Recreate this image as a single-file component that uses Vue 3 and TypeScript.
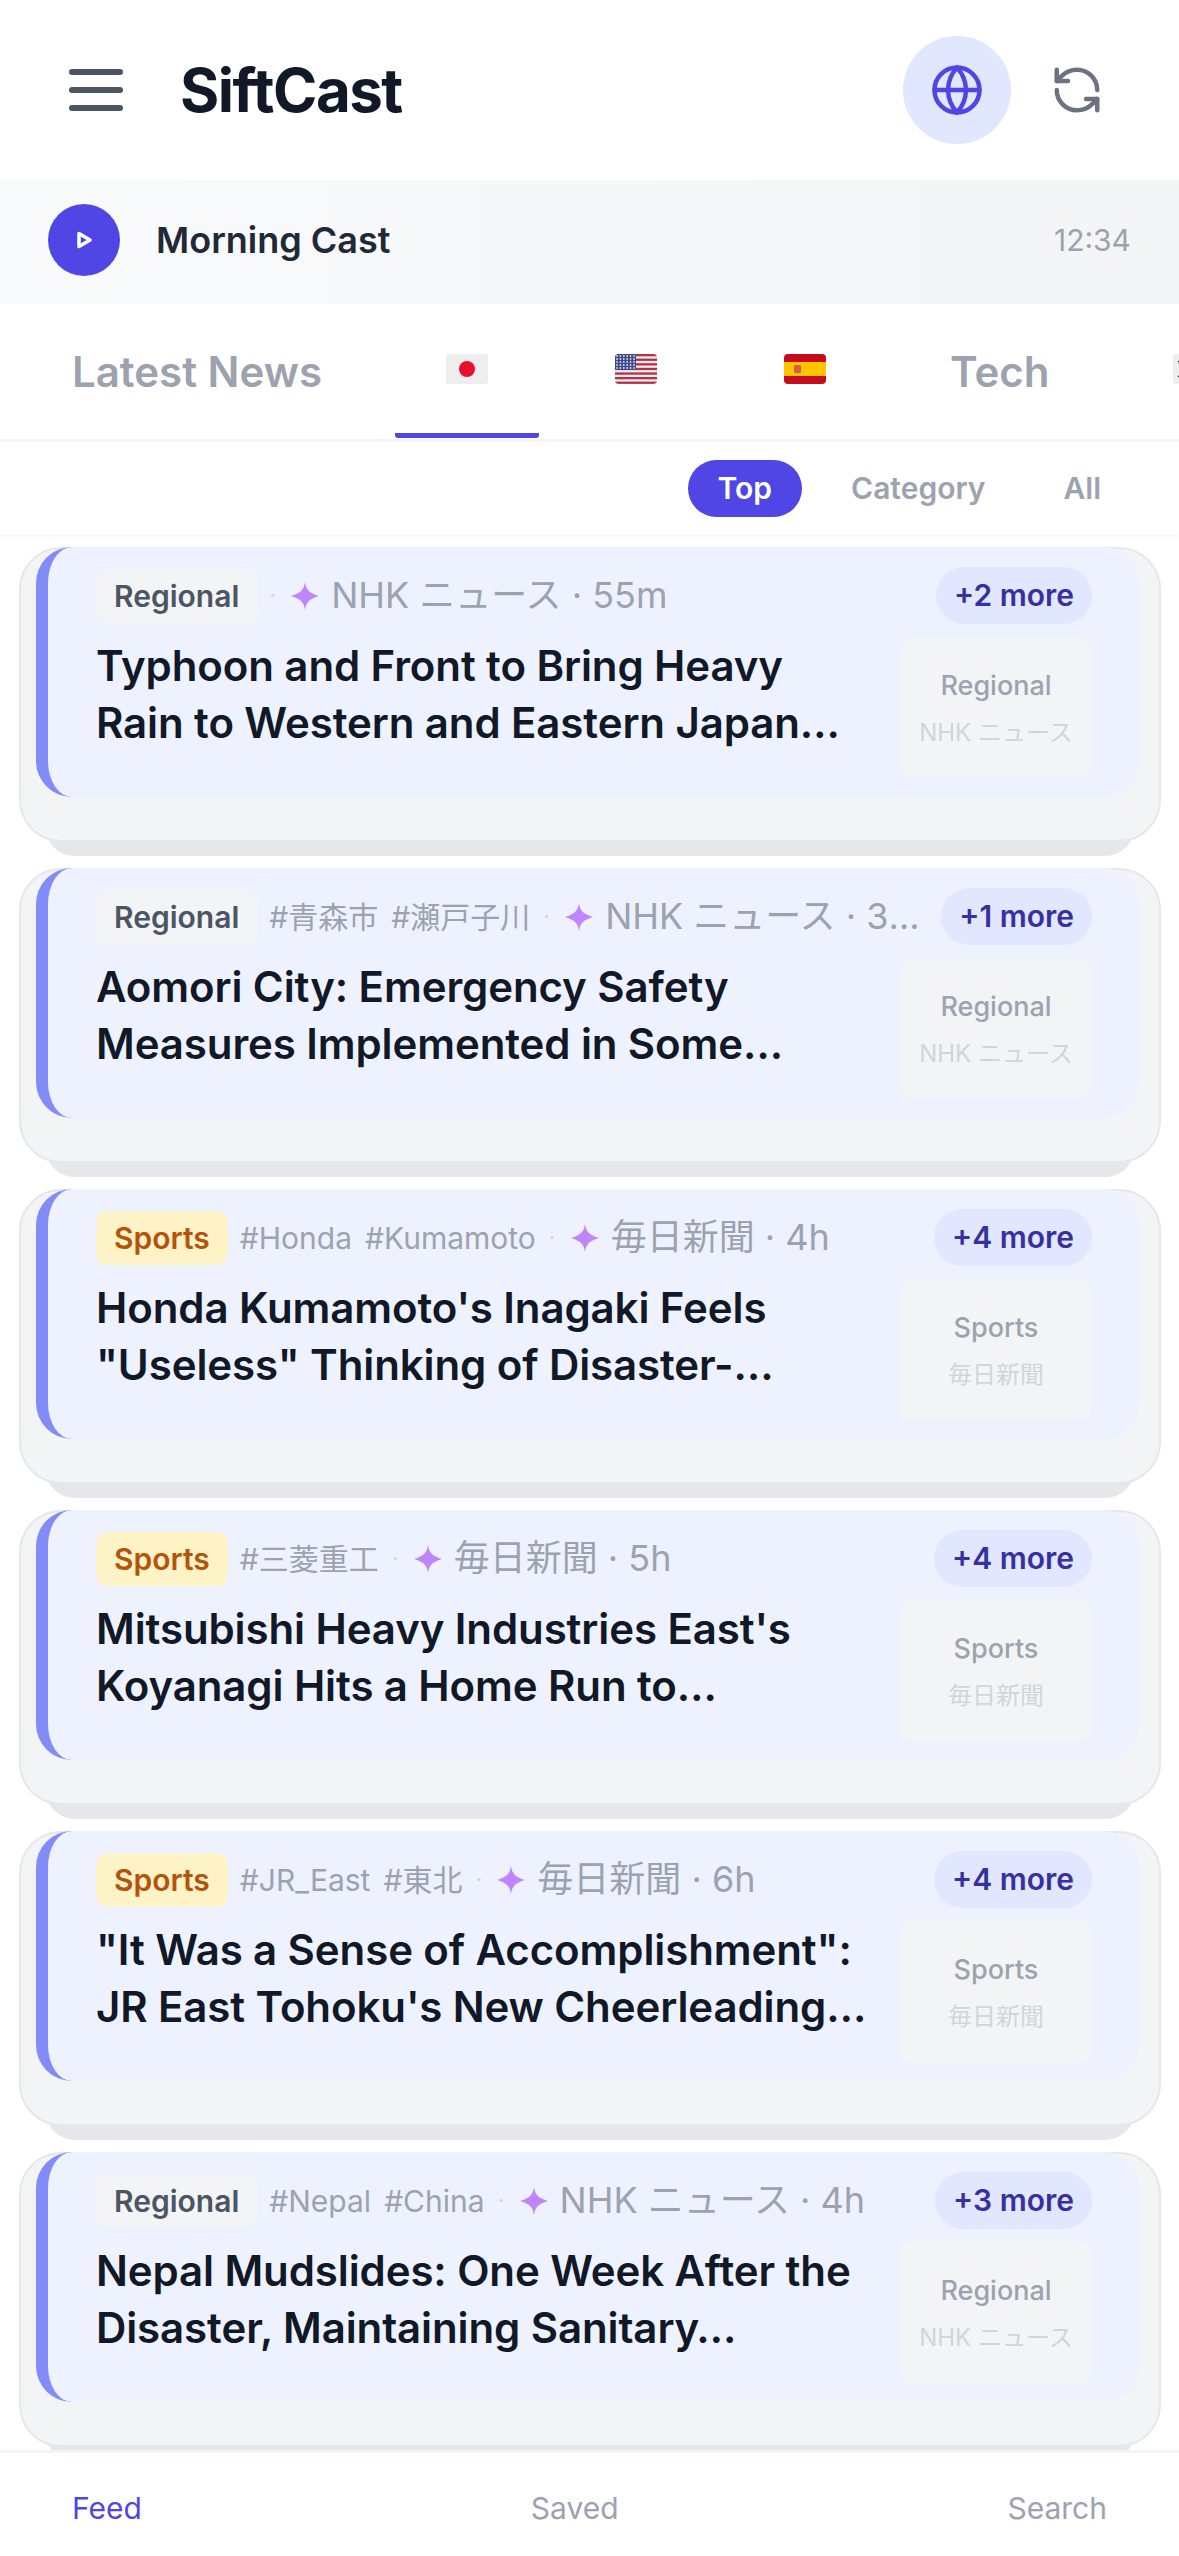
<template>
  <div class="app">
    <header class="top-bar">
      <div class="brand">
        <svg class="menu-icon" viewBox="0 0 54 44" fill="none" stroke="#4b5563" stroke-width="6" stroke-linecap="round">
          <line x1="3" y1="4" x2="51" y2="4" />
          <line x1="3" y1="22" x2="51" y2="22" />
          <line x1="3" y1="40" x2="51" y2="40" />
        </svg>
        <h1>SiftCast</h1>
      </div>
      <div class="top-actions">
        <button class="globe-btn">
          <svg viewBox="0 0 24 24" fill="none" stroke="#4f46e5" stroke-width="2" stroke-linecap="round" stroke-linejoin="round">
            <circle cx="12" cy="12" r="10" />
            <line x1="2" y1="12" x2="22" y2="12" />
            <path d="M12 2a15.3 15.3 0 0 1 4 10 15.3 15.3 0 0 1-4 10 15.3 15.3 0 0 1-4-10 15.3 15.3 0 0 1 4-10z" />
          </svg>
        </button>
        <button class="refresh-btn">
          <svg viewBox="0 0 24 24" fill="none" stroke="#6b7280" stroke-width="2" stroke-linecap="round" stroke-linejoin="round">
            <path d="M21 12a9 9 0 0 0-9-9 9.75 9.75 0 0 0-6.74 2.74L3 8" />
            <path d="M3 3v5h5" />
            <path d="M3 12a9 9 0 0 0 9 9 9.75 9.75 0 0 0 6.74-2.74L21 16" />
            <path d="M16 16h5v5" />
          </svg>
        </button>
      </div>
    </header>

    <div class="cast-bar">
      <span class="play">
        <svg viewBox="0 0 24 24" fill="none" stroke="#fff" stroke-width="3.500" stroke-linejoin="round">
          <polygon points="7,5.500 18,12 7,18.500" />
        </svg>
      </span>
      <span class="cast-title">Morning Cast</span>
      <span class="cast-time">12:34</span>
    </div>

    <nav class="tabs">
      <div class="tab">Latest News</div>
      <div class="tab active">
        <svg class="flag" viewBox="0 0 42 30">
          <rect width="42" height="30" rx="3" fill="#eeeeee" />
          <circle cx="21" cy="15" r="8" fill="#e8112d" />
        </svg>
      </div>
      <div class="tab">
        <svg class="flag" viewBox="0 0 42 30">
          <clipPath id="us-clip"><rect width="42" height="30" rx="4" /></clipPath>
          <g clip-path="url(#us-clip)">
            <rect width="42" height="30" fill="#f4eeee" />
            <rect v-for="n in 7" :key="n" x="0" :y="(n - 1) * 4.6" width="42" height="2.3" fill="#b0334a" />
            <rect width="21" height="16" fill="#3f4a82" />
            <circle v-for="s in usStars" :key="s.id" :cx="s.x" :cy="s.y" r="0.9" fill="#d8dcf0" />
          </g>
        </svg>
      </div>
      <div class="tab">
        <svg class="flag" viewBox="0 0 42 30">
          <clipPath id="es-clip"><rect width="42" height="30" rx="4" /></clipPath>
          <g clip-path="url(#es-clip)">
            <rect width="42" height="30" fill="#c60b1e" />
            <rect y="8" width="42" height="14" fill="#ffc400" />
            <rect x="10" y="11" width="7" height="8" rx="1.5" fill="#d9594c" />
          </g>
        </svg>
      </div>
      <div class="tab">Tech</div>
      <div class="tab">
        <svg class="flag" viewBox="0 0 42 30">
          <rect width="42" height="30" rx="3" fill="#eeeeee" />
          <circle cx="21" cy="15" r="7" fill="#cd2e3a" />
          <path d="M14 15a7 7 0 0 0 14 0z" fill="#0047a0" />
          <path d="M5 8l6-4M6 10l6-4M31 26l6-4M30 24l6-4M5 22l6 4M31 4l6 4" stroke="#333" stroke-width="1.5" />
        </svg>
      </div>
    </nav>

    <div class="sub-tabs">
      <span class="sub-tab active">Top</span>
      <span class="sub-tab">Category</span>
      <span class="sub-tab">All</span>
    </div>

    <main class="feed">
      <article v-for="item in articles" :key="item.id" class="card">
        <div class="card-inner">
          <div class="meta">
            <span class="tag" :class="item.category.toLowerCase()">{{ item.category }}</span>
            <div class="meta-line">
              <span v-for="h in item.hashtags" :key="h" class="hashtag">#{{ h }}</span>
              <span class="dot">·</span>
              <svg class="spark" viewBox="0 0 24 24"><path d="M12 0C13 6 14.500 9 24 12 14.500 15 13 18 12 24 11 18 9.500 15 0 12 9.500 9 11 6 12 0z" fill="#c084fc" /></svg>
              <span class="source">{{ item.source }} · {{ item.age }}</span>
            </div>
            <span class="more">+{{ item.more }} more</span>
          </div>
          <div class="body">
            <h2>{{ item.title }}</h2>
            <div class="thumb">
              <span class="thumb-cat">{{ item.category }}</span>
              <span class="thumb-src">{{ item.source }}</span>
            </div>
          </div>
        </div>
      </article>
    </main>

    <footer class="bottom-nav">
      <span class="active">Feed</span>
      <span>Saved</span>
      <span>Search</span>
    </footer>
  </div>
</template>

<script setup lang="ts">
interface Article {
  id: number
  category: 'Regional' | 'Sports'
  hashtags: string[]
  source: string
  age: string
  more: number
  title: string
}

const usStars: { id: number; x: number; y: number }[] = []
for (let row = 0; row < 5; row++) {
  for (let col = 0; col < 6; col++) {
    usStars.push({ id: row * 6 + col, x: 2 + col * 3.4, y: 2 + row * 3 })
  }
}

const articles: Article[] = [
  {
    id: 1,
    category: 'Regional',
    hashtags: [],
    source: 'NHK ニュース',
    age: '55m',
    more: 2,
    title: 'Typhoon and Front to Bring Heavy Rain to Western and Eastern Japan…'
  },
  {
    id: 2,
    category: 'Regional',
    hashtags: ['青森市', '瀬戸子川'],
    source: 'NHK ニュース',
    age: '39m',
    more: 1,
    title: 'Aomori City: Emergency Safety Measures Implemented in Some…'
  },
  {
    id: 3,
    category: 'Sports',
    hashtags: ['Honda', 'Kumamoto'],
    source: '毎日新聞',
    age: '4h',
    more: 4,
    title: 'Honda Kumamoto\'s Inagaki Feels "Useless" Thinking of Disaster-…'
  },
  {
    id: 4,
    category: 'Sports',
    hashtags: ['三菱重工'],
    source: '毎日新聞',
    age: '5h',
    more: 4,
    title: 'Mitsubishi Heavy Industries East\'s Koyanagi Hits a Home Run to…'
  },
  {
    id: 5,
    category: 'Sports',
    hashtags: ['JR_East', '東北'],
    source: '毎日新聞',
    age: '6h',
    more: 4,
    title: '"It Was a Sense of Accomplishment": JR East Tohoku\'s New Cheerleading…'
  },
  {
    id: 6,
    category: 'Regional',
    hashtags: ['Nepal', 'China'],
    source: 'NHK ニュース',
    age: '4h',
    more: 3,
    title: 'Nepal Mudslides: One Week After the Disaster, Maintaining Sanitary…'
  }
]
</script>

<style>
html,
body {
  margin: 0;
  background: #fff;
}
</style>

<style scoped>
.app {
  height: 2556px;
  display: flex;
  flex-direction: column;
  overflow: hidden;
  background: #fff;
  font-family: Inter, "Noto Sans CJK JP", sans-serif;
}

.top-bar {
  height: 180px;
  flex-shrink: 0;
  display: flex;
  justify-content: space-between;
  align-items: center;
  padding: 0 75px 0 69px;
  box-sizing: border-box;
}

.brand {
  display: flex;
  align-items: center;
  gap: 57px;
}

.menu-icon {
  width: 54px;
  height: 44px;
}

.brand h1 {
  margin: 0;
  font-size: 60px;
  font-weight: 700;
  letter-spacing: -1.5px;
  color: #111827;
}

.top-actions {
  display: flex;
  align-items: center;
  gap: 39px;
}

.top-actions button {
  border: none;
  padding: 0;
  background: none;
  display: flex;
  align-items: center;
  justify-content: center;
}

.top-actions svg {
  width: 54px;
  height: 54px;
}

.globe-btn {
  width: 108px;
  height: 108px;
  border-radius: 50%;
  background: #e0e7ff !important;
}

.cast-bar {
  height: 124px;
  flex-shrink: 0;
  display: flex;
  align-items: center;
  padding: 0 48px 5px;
  box-sizing: border-box;
  background: linear-gradient(90deg, #f9fafb, #f3f4f6);
}

.play {
  width: 72px;
  height: 72px;
  border-radius: 50%;
  background: #4f46e5;
  display: flex;
  align-items: center;
  justify-content: center;
}

.play svg {
  width: 24px;
  height: 24px;
}

.cast-title {
  margin-left: 36px;
  flex: 1;
  font-size: 36px;
  font-weight: 600;
  color: #1f2937;
}

.cast-time {
  font-size: 30px;
  color: #9ca3af;
}

.tabs {
  height: 138px;
  flex-shrink: 0;
  display: flex;
  gap: 25px;
  padding-left: 24px;
  overflow: hidden;
  border-bottom: 3px solid #f3f4f6;
  box-sizing: border-box;
}

.tab {
  flex-shrink: 0;
  height: 134px;
  box-sizing: border-box;
  padding: 0 48px;
  display: flex;
  justify-content: center;
  font-size: 42px;
  line-height: 136px;
  font-weight: 600;
  color: #9ca3af;
  white-space: nowrap;
  border-bottom: 5px solid transparent;
}

.tab.active {
  border-bottom-color: #4f46e5;
  border-radius: 0 0 3px 3px;
}

.flag {
  width: 42px;
  height: 30px;
  margin: 50px 3px 0;
}

.sub-tabs {
  height: 93px;
  flex-shrink: 0;
  display: flex;
  justify-content: flex-end;
  align-items: center;
  gap: 24px;
  padding-right: 51px;
  box-sizing: border-box;
  box-shadow: 0 2px 4px rgba(0, 0, 0, 0.04);
  position: relative;
  z-index: 1;
  background: #fff;
}

.sub-tab {
  padding: 0 27px;
  height: 57px;
  line-height: 57px;
  font-size: 30px;
  font-weight: 600;
  color: #9ca3af;
}

.sub-tab.active {
  background: #4f46e5;
  color: #fff;
  border-radius: 30px;
  padding: 0 30px;
  margin-right: -2px;
}

.feed {
  flex: 1;
  min-height: 0;
  overflow: hidden;
  padding: 12px 18px 0 19px;
  isolation: isolate;
}

.card {
  position: relative;
  height: 295px;
  margin-bottom: 26px;
  padding: 0 19px 0 15px;
  box-sizing: border-box;
  background: #f3f4f6;
  border: 2px solid #e5e7eb;
  border-radius: 42px;
}

.card::after {
  content: "";
  position: absolute;
  z-index: -1;
  left: 24px;
  right: 24px;
  bottom: -16px;
  height: 60px;
  background: #e5e7eb;
  border-radius: 0 0 30px 30px;
}

.card-inner {
  height: 250px;
  margin-top: -2px;
  box-sizing: border-box;
  padding: 20px 48px 19px 48px;
  background: #eef2ff;
  border-left: 12px solid #818cf8;
  border-radius: 36px;
}

.meta {
  display: flex;
  align-items: center;
  height: 57px;
}

.tag {
  flex-shrink: 0;
  padding: 0 18px;
  height: 54px;
  line-height: 54px;
  border-radius: 12px;
  font-size: 30px;
  font-weight: 600;
}

.tag.regional {
  background: #f3f4f6;
  color: #4b5563;
}

.tag.sports {
  background: #fef3c7;
  color: #b45309;
}

.meta-line {
  flex: 1;
  min-width: 0;
  display: flex;
  align-items: center;
  margin-left: 12px;
  color: #9ca3af;
  white-space: nowrap;
  overflow: hidden;
}

.hashtag {
  flex-shrink: 0;
  font-size: 30px;
  line-height: 40px;
  margin-right: 13px;
}

.dot {
  flex-shrink: 0;
  font-size: 24px;
  color: #d1d5db;
  margin-right: 15px;
}

.spark {
  flex-shrink: 0;
  width: 28px;
  height: 28px;
  margin-right: 12px;
}

.source {
  min-width: 0;
  overflow: hidden;
  text-overflow: ellipsis;
  font-size: 36px;
  line-height: 48px;
  margin-top: -1px;
  margin-right: 20px;
}

.more {
  flex-shrink: 0;
  height: 57px;
  line-height: 57px;
  padding: 0 18px;
  border-radius: 30px;
  background: #e0e7ff;
  color: #3730a3;
  font-size: 30px;
  font-weight: 600;
}

.body {
  display: flex;
  justify-content: space-between;
  margin-top: 13px;
}

.body h2 {
  margin: 0;
  width: 785px;
  font-size: 42px;
  line-height: 57px;
  font-weight: 600;
  letter-spacing: -0.1px;
  color: #111827;
}

.thumb {
  width: 192px;
  height: 141px;
  flex-shrink: 0;
  display: flex;
  flex-direction: column;
  align-items: center;
  justify-content: center;
  gap: 11px;
  padding-top: 1px;
  box-sizing: border-box;
  background: #f3f4f6;
  border-radius: 12px;
}

.thumb-cat {
  font-size: 27px;
  font-weight: 500;
  color: #9ca3af;
}

.thumb-src {
  font-size: 24px;
  color: #d1d5db;
  white-space: nowrap;
}

.bottom-nav {
  height: 106px;
  flex-shrink: 0;
  display: flex;
  justify-content: space-between;
  align-items: center;
  padding: 0 72px;
  box-sizing: border-box;
  border-top: 3px solid #f3f4f6;
  background: #fff;
  font-size: 30px;
  color: #9ca3af;
  position: relative;
  z-index: 1;
}

.bottom-nav span {
  margin-top: 7px;
}

.bottom-nav .active {
  color: #4f46e5;
}
</style>
